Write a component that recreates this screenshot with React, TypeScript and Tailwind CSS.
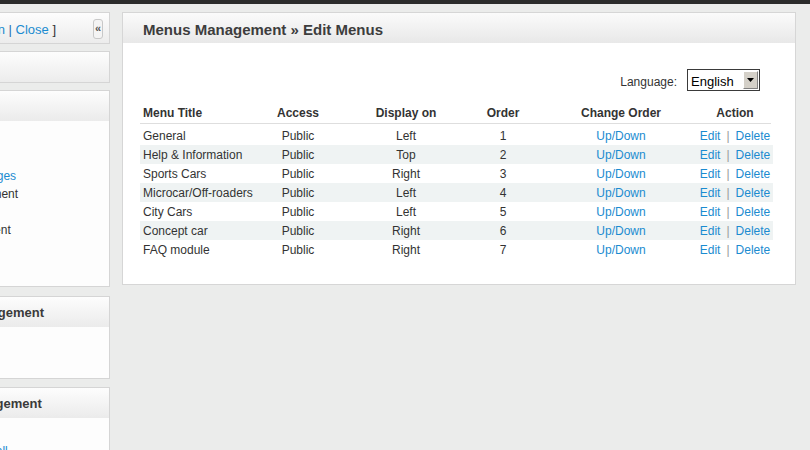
const rows = [
  { title: 'General', access: 'Public', display: 'Left', order: 1 },
  { title: 'Help & Information', access: 'Public', display: 'Top', order: 2 },
  { title: 'Sports Cars', access: 'Public', display: 'Right', order: 3 },
  { title: 'Microcar/Off-roaders', access: 'Public', display: 'Left', order: 4 },
  { title: 'City Cars', access: 'Public', display: 'Left', order: 5 },
  { title: 'Concept car', access: 'Public', display: 'Right', order: 6 },
  { title: 'FAQ module', access: 'Public', display: 'Right', order: 7 },
];

const gridCols = 'grid grid-cols-[105px_106px_110px_84px_152px_76px]';

const SideHeader = ({ children }: { children?: React.ReactNode }) => (
  <div className="h-[30px] flex items-center pl-[12px] pt-[2px] bg-gradient-to-b from-[#fdfdfd] to-[#ebebeb] text-[13px] font-bold text-[#3a3a3a] whitespace-nowrap">
    {children}
  </div>
);

const Sidebar = () => (
  <div className="w-[230px] ml-[-120px] shrink-0 flex flex-col">
    <div className="h-[32px] border border-[#d5d5d5] bg-gradient-to-b from-[#fdfdfd] to-[#ececec] flex items-center justify-end pr-[6px]">
      <span className="text-[13px] text-[#333] whitespace-nowrap mr-[37px] pt-[4px]">
        [ <a className="text-[#1b8bd0]">Open</a> <span className="text-[#1b6fb0]">|</span>{' '}
        <a className="text-[#1b8bd0]">Close</a> ]
      </span>
      <button className="w-[10px] h-[20px] mt-[1px] rounded-[3px] border border-[#c8c8c8] bg-[#f4f4f4] text-[11px] font-bold leading-none text-[#555] flex items-center justify-center">
        «
      </button>
    </div>

    <div className="mt-[7px] h-[32px] border border-[#d5d5d5] bg-gradient-to-b from-[#fdfdfd] to-[#ececec]" />

    <div className="mt-[7px] h-[197px] border border-[#d5d5d5] bg-[#fdfdfd]">
      <SideHeader />
      <ul className="pl-[9px] pt-[10px] text-[12px] leading-[18px] text-[#333] whitespace-nowrap">
        <li>Site Settings</li>
        <li>Main Page</li>
        <li className="text-[#1b8bd0]">Manage Content Pages</li>
        <li>Templates Management</li>
        <li>News</li>
        <li>Products Management</li>
        <li>Banners</li>
      </ul>
    </div>

    <div className="mt-[9px] h-[83px] border border-[#d5d5d5] bg-[#fdfdfd]">
      <SideHeader>Customers Management</SideHeader>
    </div>

    <div className="mt-[8px] h-[80px] border border-[#d5d5d5] bg-[#fdfdfd]">
      <SideHeader>Newsletter Management</SideHeader>
      <ul className="pl-[12px] pt-[6px] text-[12px] leading-[18px] text-[#333] whitespace-nowrap">
        <li>Subscribers</li>
        <li className="text-[#1b8bd0]">Send newsletter to all</li>
      </ul>
    </div>
  </div>
);

const LanguageSelect = () => (
  <div className="flex items-center justify-end pr-[35px] mt-[26px]">
    <span className="text-[12px] text-[#333] mr-[10px] pt-[4px]">Language:</span>
    <div className="w-[73px] h-[22px] border border-[#3a3a3a] bg-white flex items-center">
      <span className="flex-1 pl-[3px] pt-[3px] text-[13px] text-black">English</span>
      <div className="w-[15px] h-[18px] mr-[1px] bg-[#d4d0c8] border-t border-l border-t-white border-l-white border-b border-r border-b-[#808080] border-r-[#808080] flex items-center justify-center">
        <svg width="7" height="4" viewBox="0 0 7 4">
          <path d="M0 0h7L3.5 4z" fill="#000" />
        </svg>
      </div>
    </div>
  </div>
);

const MenusTable = () => (
  <div className="w-[633px] ml-[17px] mt-[12px] text-[12px] text-[#333] whitespace-nowrap">
    <div className={`${gridCols} h-[21px] items-center font-bold border-b border-[#dedede] mr-[2px]`}>
      <div className="pl-[3px]">Menu Title</div>
      <div className="text-center">Access</div>
      <div className="text-center">Display on</div>
      <div className="text-center">Order</div>
      <div className="text-center">Change Order</div>
      <div className="text-center">Action</div>
    </div>
    <div className="mt-[2px]">
      {rows.map((r, i) => (
        <div
          key={r.order}
          className={`${gridCols} h-[19px] items-center ${i % 2 === 1 ? 'bg-[#eff3f3]' : 'bg-white'}`}
        >
          <div className="pl-[3px]">{r.title}</div>
          <div className="text-center">{r.access}</div>
          <div className="text-center">{r.display}</div>
          <div className="text-center">{r.order}</div>
          <div className="text-center text-[#1b8bd0]">
            <a>Up</a>/<a>Down</a>
          </div>
          <div className="text-center text-[#1b8bd0]">
            <a>Edit</a>
            <span className="mx-[6px] text-[#9a9a9a]">|</span>
            <a>Delete</a>
          </div>
        </div>
      ))}
    </div>
  </div>
);

export default function App() {
  return (
    <div className="w-[810px] h-[450px] overflow-hidden bg-[#ebeceb] font-['Liberation_Sans',Arial,sans-serif]">
      <div className="h-[4px] bg-[#2b2b2b]" />
      <div className="flex gap-[12px] pt-[8px]">
        <Sidebar />
        <div className="w-[674px] h-[273px] shrink-0 border border-[#d6d6d6] bg-white">
          <div className="h-[30px] flex items-center pl-[20px] pt-[4px] bg-gradient-to-b from-[#fbfbfb] to-[#e8e8e8]">
            <h1 className="text-[15px] font-bold text-[#3d3d3d]">Menus Management » Edit Menus</h1>
          </div>
          <LanguageSelect />
          <MenusTable />
        </div>
      </div>
    </div>
  );
}
